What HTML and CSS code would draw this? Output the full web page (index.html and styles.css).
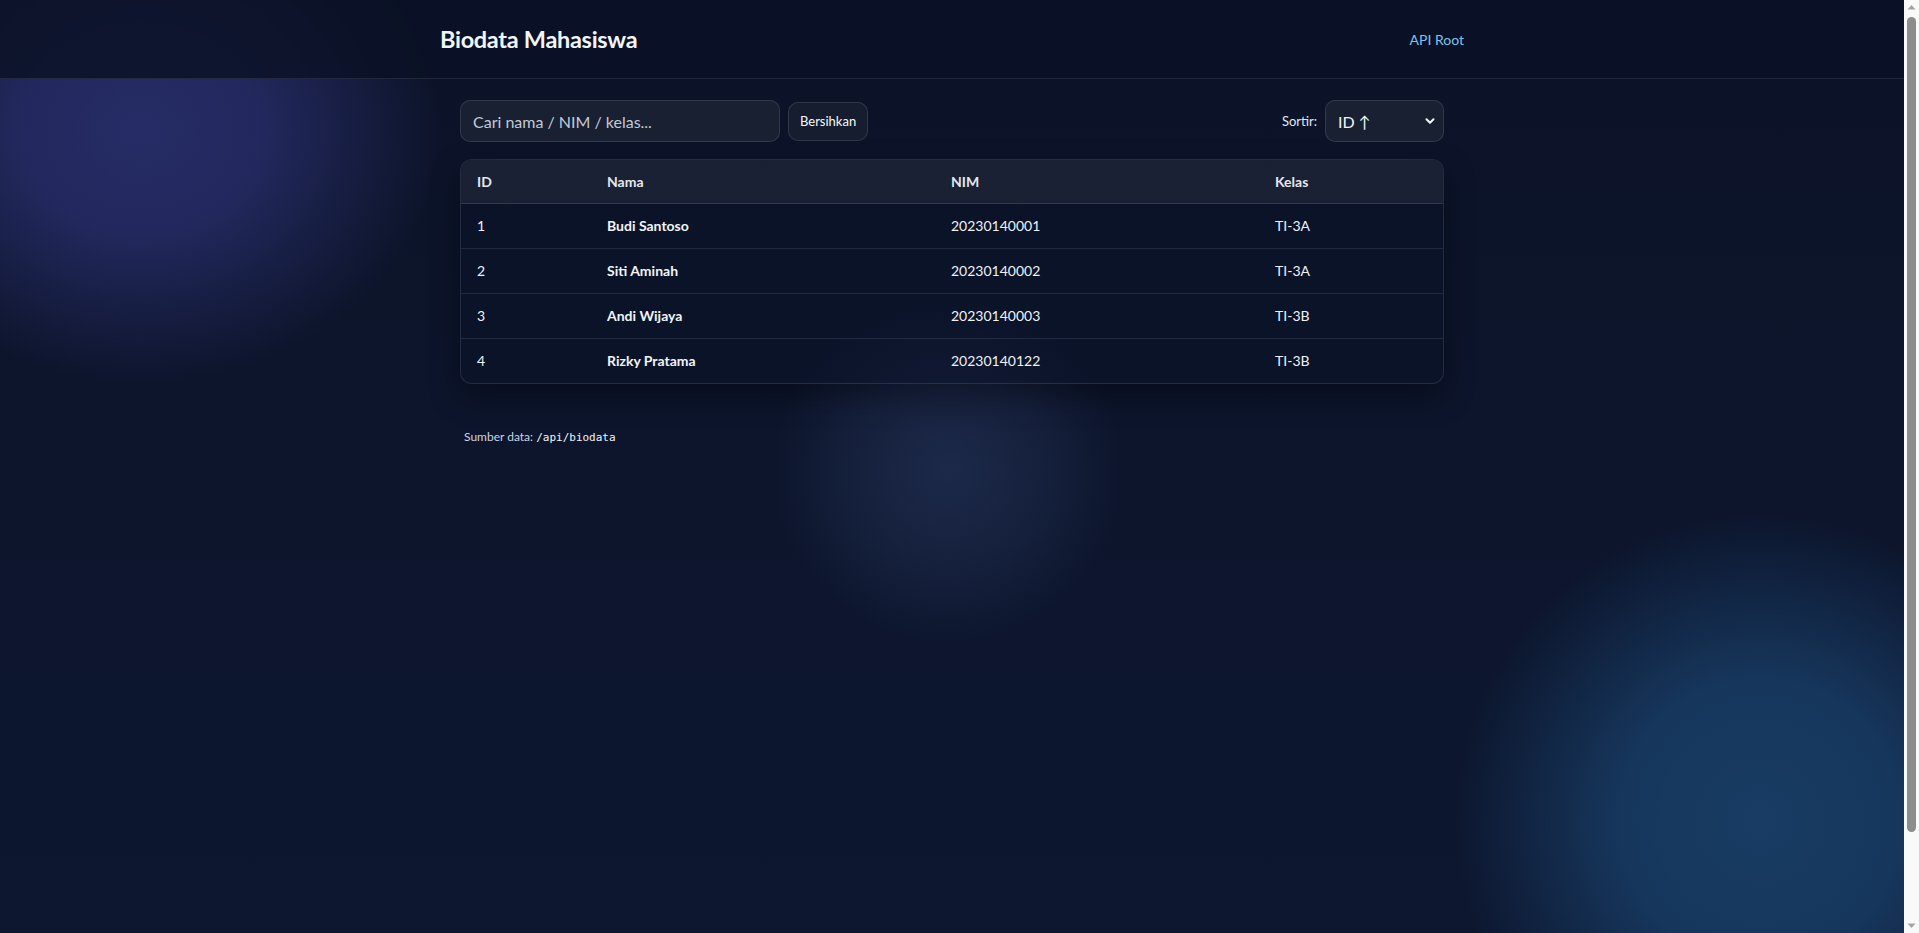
FILE: index.html
```html
<!DOCTYPE html>
<html lang="id">
<head>
<meta charset="utf-8">
<title>Biodata Mahasiswa</title>
<link rel="stylesheet" href="styles.css">
</head>
<body>
<header class="topbar">
  <div class="topbar-inner">
    <h1 class="brand">Biodata Mahasiswa</h1>
    <a class="api-link" href="#">API Root</a>
  </div>
</header>
<main class="page">
  <div class="controls">
    <div class="search-group">
      <input class="search" type="text" placeholder="Cari nama / NIM / kelas...">
      <button class="btn" type="button">Bersihkan</button>
    </div>
    <div class="sort-group">
      <label class="sort-label">Sortir:</label>
      <div class="select-wrap">
        <select class="select">
          <option>ID ↑</option>
          <option>ID ↓</option>
          <option>Nama</option>
        </select>
        <svg class="chevron" width="12" height="12" viewBox="0 0 12 12"><path d="M2.5 4.2 L6 7.7 L9.5 4.2" fill="none" stroke="#f1f5f9" stroke-width="2" stroke-linecap="round" stroke-linejoin="round"/></svg>
      </div>
    </div>
  </div>

  <div class="table-card">
    <table class="data">
      <thead>
        <tr>
          <th class="c-id">ID</th>
          <th class="c-nama">Nama</th>
          <th class="c-nim">NIM</th>
          <th class="c-kelas">Kelas</th>
        </tr>
      </thead>
      <tbody>
        <tr><td>1</td><td class="name">Budi Santoso</td><td>20230140001</td><td>TI-3A</td></tr>
        <tr><td>2</td><td class="name">Siti Aminah</td><td>20230140002</td><td>TI-3A</td></tr>
        <tr><td>3</td><td class="name">Andi Wijaya</td><td>20230140003</td><td>TI-3B</td></tr>
        <tr><td>4</td><td class="name">Rizky Pratama</td><td>20230140122</td><td>TI-3B</td></tr>
      </tbody>
    </table>
  </div>

  <p class="source">Sumber data: <code>/api/biodata</code></p>
</main>

<div class="scrollbar" aria-hidden="true">
  <svg class="sb-arrow" width="15" height="15" viewBox="0 0 15 15"><path d="M3.5 9.5 L7.5 5 L11.5 9.5 Z" fill="#a3a3a3"/></svg>
  <div class="sb-track"><div class="sb-thumb"></div></div>
  <svg class="sb-arrow" width="15" height="15" viewBox="0 0 15 15"><path d="M3.5 5.5 L7.5 10 L11.5 5.5 Z" fill="#a3a3a3"/></svg>
</div>
</body>
</html>
```

FILE: styles.css
```css
* { box-sizing: border-box; }

html, body { margin: 0; padding: 0; }

body {
  padding-right: 15px;
  font-family: "Lato", "Noto Sans", "DejaVu Sans", sans-serif;
  color: #e2e8f0;
  background-color: #0c1429;
  background-image:
    radial-gradient(ellipse 300px 255px at 140px 130px, rgba(38, 44, 102, 1) 0, rgba(38, 44, 102, 0.85) 40%, rgba(38, 44, 102, 0) 100%),
    radial-gradient(circle at 948px 470px, rgba(32, 46, 80, 0.8) 0, rgba(32, 46, 80, 0.45) 95px, rgba(32, 46, 80, 0) 175px),
    radial-gradient(circle at 1760px 820px, rgba(24, 60, 100, 1) 0, rgba(24, 60, 100, 0.85) 140px, rgba(24, 60, 100, 0) 305px),
    linear-gradient(180deg, #0c1328 0%, #0d1730 100%);
  background-attachment: fixed;
}

/* browser scrollbar as seen in the capture */
.scrollbar {
  position: fixed;
  top: 0;
  right: 0;
  width: 15px;
  height: 100vh;
  background: #f9f9f9;
  display: flex;
  flex-direction: column;
}

.sb-arrow { flex: none; display: block; }

.sb-track {
  flex: 1;
  padding: 2px 3px 86px;
  display: flex;
}

.sb-thumb {
  flex: 1;
  background: #8d8d8d;
  border-radius: 5px;
}

.topbar {
  height: 79px;
  background: rgba(10, 18, 38, 0.85);
  border-bottom: 1px solid rgba(148, 163, 184, 0.16);
}

.topbar-inner {
  max-width: 1024px;
  height: 100%;
  margin: 0 auto;
  display: flex;
  align-items: center;
  justify-content: space-between;
}

.brand {
  margin: 0;
  font-size: 23.5px;
  font-weight: 700;
  color: #f1f5f9;
  letter-spacing: -0.3px;
}

.api-link {
  color: #7cc4ee;
  text-decoration: none;
  font-size: 14px;
}

.page {
  max-width: 1024px;
  margin: 0 auto;
  padding: 21px 20px 0;
  min-height: calc(100vh + 20px);
}

.controls {
  display: flex;
  align-items: center;
  justify-content: space-between;
  margin-bottom: 17px;
}

.search-group, .sort-group {
  display: flex;
  align-items: center;
  gap: 8px;
}

.search {
  width: 320px;
  height: 42px;
  padding: 0 12px;
  border-radius: 10px;
  border: 1px solid rgba(148, 163, 184, 0.2);
  background: #182032;
  color: #e2e8f0;
  font-family: inherit;
  font-size: 16px;
  outline: none;
}

.search::placeholder { color: #c3cad6; }

.btn {
  height: 39px;
  padding: 0 11px;
  border-radius: 10px;
  border: 1px solid rgba(148, 163, 184, 0.2);
  background: #151d2f;
  color: #f8fafc;
  font-family: inherit;
  font-size: 13px;
}

.sort-label {
  font-size: 13px;
  color: #e2e8f0;
}

.select-wrap {
  position: relative;
}

.select {
  appearance: none;
  -webkit-appearance: none;
  width: 119px;
  height: 42px;
  padding: 0 12px;
  border-radius: 10px;
  border: 1px solid rgba(148, 163, 184, 0.2);
  background: #182032;
  color: #f1f5f9;
  font-family: inherit;
  font-size: 16px;
}

.chevron {
  position: absolute;
  right: 8px;
  top: 15px;
  pointer-events: none;
}

.table-card {
  border: 1px solid rgba(148, 163, 184, 0.18);
  border-radius: 12px;
  overflow: hidden;
  background: rgba(11, 19, 40, 0.55);
  box-shadow: 0 12px 30px rgba(0, 0, 0, 0.35);
}

.data {
  width: 100%;
  border-collapse: collapse;
  font-size: 14px;
}

.data th, .data td {
  text-align: left;
  padding: 14px 16px;
  line-height: 16px;
}

.data th {
  padding-bottom: 13px;
  background: rgba(27, 34, 52, 0.95);
  color: #e2e8f0;
  font-weight: 700;
  border-bottom: 1px solid rgba(148, 163, 184, 0.18);
}

.data td {
  color: #eef2f7;
  border-bottom: 1px solid rgba(148, 163, 184, 0.16);
}

.data tbody tr:last-child td { border-bottom: none; }

.data td.name {
  font-weight: 700;
  color: #f1f5f9;
}

.c-id { width: 130px; }
.c-nama { width: 344px; }
.c-nim { width: 324px; }

.source {
  margin: 45px 0 0 4px;
  font-size: 12px;
  color: #cbd5e1;
}

.source code {
  font-family: "DejaVu Sans Mono", "Liberation Mono", monospace;
  font-size: 11px;
  color: #f1f5f9;
}
```
